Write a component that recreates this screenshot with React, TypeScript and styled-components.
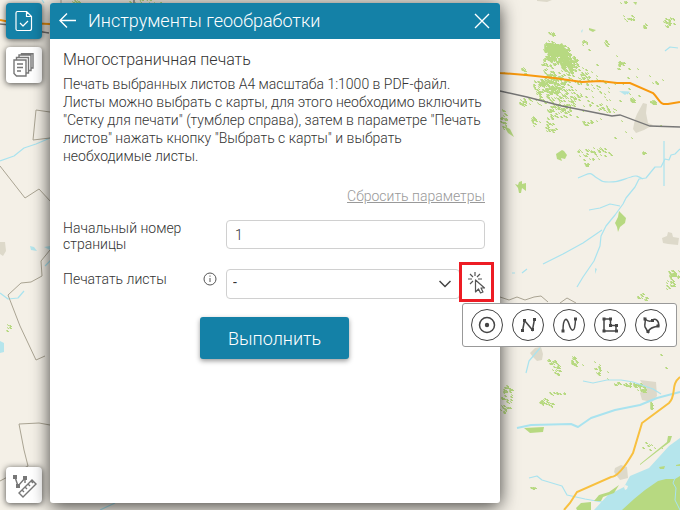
import React from "react";
import styled, { createGlobalStyle } from "styled-components";

const GlobalStyle = createGlobalStyle`
  *, *::before, *::after { box-sizing: border-box; }
  html, body, #root { height: 100%; }
  body { margin: 0; overflow: hidden; font-family: Roboto, "Liberation Sans", sans-serif; font-weight: 300; color: #333; }
  button, input, select { font: inherit; color: inherit; }
`;

const accent = "#1481a7";

const Page = styled.div`
  position: relative;
  display: flex;
  gap: 8px;
  min-height: 100vh;
  padding: 3px 6px 7px;
  background: #f4f0e7;
`;

const MapCanvas = styled.svg`
  position: absolute;
  inset: 0;
  width: 100%;
  height: 100%;
`;

const Rail = styled.nav`
  position: relative;
  display: flex;
  flex-direction: column;
  gap: 8px;
  width: 36px;
`;

const ToolButton = styled.button<{ $active?: boolean; $bottom?: boolean }>`
  display: flex;
  align-items: center;
  justify-content: center;
  width: 36px;
  height: 36px;
  margin-top: ${(p) => (p.$bottom ? "auto" : "0")};
  padding: 0;
  border: 0;
  border-radius: 4px;
  background: ${(p) => (p.$active ? accent : "#fff")};
  color: ${(p) => (p.$active ? "#fff" : "#777")};
  box-shadow: 0 1px 6px rgba(0, 0, 0, 0.7);
`;

const Panel = styled.section`
  position: relative;
  display: flex;
  flex-direction: column;
  flex: 0 1 450px;
  min-width: 0;
  border-radius: 3px;
  background: #fff;
  box-shadow: 0 3px 18px rgba(0, 0, 0, 0.75);
`;

const PanelHeader = styled.header`
  display: flex;
  align-items: center;
  height: 36px;
  padding: 0 10px 0 9px;
  gap: 11px;
  border-radius: 3px 3px 0 0;
  background: ${accent};
  color: #fff;
`;

const PanelTitle = styled.h1`
  flex: 1;
  margin: 0;
  font-size: 18px;
  font-weight: 300;
  line-height: 24px;
`;

const PlainButton = styled.button`
  display: flex;
  padding: 0;
  border: 0;
  background: none;
`;

const PanelBody = styled.div`
  padding: 10px 15px 0 13px;
`;

const Subtitle = styled.h2`
  margin: 0 0 4px;
  font-size: 16px;
  font-weight: 300;
  line-height: 22px;
`;

const Description = styled.p`
  margin: 0;
  font-size: 14px;
  line-height: 18px;
`;

const ResetRow = styled.div`
  display: flex;
  justify-content: flex-end;
  margin: 22px 0 15px;
`;

const ResetLink = styled.a`
  color: #999;
  font-size: 14px;
  line-height: 18px;
  text-decoration: underline;
`;

const Field = styled.div`
  display: grid;
  grid-template-columns: 127px 1fr;
  column-gap: 36px;
  margin-bottom: 17px;
`;

const FieldHead = styled.div<{ $hint?: boolean }>`
  display: flex;
  justify-content: space-between;
  margin-right: -27px;
  padding-top: ${(p) => (p.$hint ? "2px" : "0")};
`;

const Label = styled.label`
  width: 127px;
  font-size: 14px;
  line-height: 16px;
`;

const InfoButton = styled(PlainButton)`
  width: 14px;
  height: 14px;
  margin-top: 1px;
`;

const TextInput = styled.input`
  width: 100%;
  height: 29px;
  padding: 0 8px;
  border: 1px solid #d0d0d0;
  border-radius: 4px;
  background: #fff;
  font-size: 14px;
`;

const PickRow = styled.div`
  display: flex;
  margin-right: -9px;
`;

const SelectBox = styled.div`
  position: relative;
  flex: 1;
  margin-right: -1px;
`;

const Select = styled.select`
  width: 100%;
  height: 30px;
  padding: 0 28px 4px 6px;
  border: 1px solid #d0d0d0;
  border-radius: 4px;
  background: #fff;
  font-size: 14px;
  font-weight: 400;
  appearance: none;
`;

const Chevron = styled.svg`
  position: absolute;
  top: 11px;
  right: 9px;
  pointer-events: none;
`;

const PickAnchor = styled.div`
  position: relative;
  width: 35px;
  margin: -7px 0 -3px;
`;

const PickButton = styled.button`
  display: flex;
  align-items: center;
  justify-content: center;
  width: 35px;
  height: 40px;
  padding: 0;
  border: 3px solid #ed1c24;
  background: #fff;
`;

const DrawMenu = styled.div`
  position: absolute;
  top: 41px;
  left: 3px;
  z-index: 2;
  display: flex;
  gap: 9px;
  padding: 5px 9px 5px 8px;
  border: 1px solid #999;
  border-radius: 3px;
  background: #fff;
`;

const DrawButton = styled.button`
  display: flex;
  width: 32px;
  height: 32px;
  padding: 0;
  border: 1px solid #444;
  border-radius: 50%;
  background: #fff;
  align-items: center;
  justify-content: center;
  flex: none;
`;

const RunButton = styled.button`
  display: block;
  height: 42px;
  margin: 18px 0 0 137px;
  padding: 0 28px;
  border: 0;
  border-radius: 3px;
  background: ${accent};
  color: #fff;
  font-size: 18px;
  font-weight: 300;
  box-shadow: 0 2px 5px rgba(0, 0, 0, 0.4);
`;

type Cluster = [number, number, number, number, number, number];

const clusters: Cluster[] = [
  [550, 50, 7, 10, 150, 1], [559, 53, 10, 10, 170, 1], [568, 62, 9, 9, 120, 1], [551, 83, 12, 10, 180, 1],
  [573, 74, 16, 11, 70, 1], [556, 98, 22, 12, 110, 1], [588, 90, 22, 16, 40, 1], [550, 124, 6, 8, 24, 1],
  [548, 66, 7, 10, 30, 1], [538, 86, 6, 8, 24, 1], [560, 110, 14, 7, 40, 1],
  [524, 101, 6, 4, 16, 1], [503, 118, 3, 10, 24, 1], [533, 120, 2, 6, 18, 1], [587, 122, 5, 4, 12, 1],
  [523, 70, 3, 4, 14, 1], [550, 33, 4, 2, 14, 1], [584, 42, 3, 2, 10, 1], [605, 43, 3, 3, 8, 1],
  [668, 21, 6, 5, 26, 1], [628, 17, 7, 3, 12, 1], [644, 25, 3, 2, 8, 1], [620, 63, 3, 3, 14, 1],
  [623, 2, 3, 2, 5, 1], [607, 108, 10, 4, 16, 1], [631, 99, 2, 4, 14, 1], [653, 102, 3, 2, 14, 1],
  [655, 82, 4, 1, 6, 1], [593, 153, 18, 7, 38, 1], [586, 164, 2, 2, 8, 1], [643, 152, 3, 1, 8, 1],
  [674, 273, 7, 4, 34, 1], [669, 284, 4, 6, 16, 1], [643, 296, 8, 3, 12, 1], [551, 361, 5, 3, 14, 1],
  [556, 369, 4, 6, 22, 1], [573, 361, 3, 6, 22, 1], [557, 393, 9, 2, 16, 1], [543, 401, 4, 3, 16, 1],
  [550, 404, 5, 2, 8, 1], [597, 369, 3, 6, 16, 1], [506, 393, 6, 10, 30, 1], [504, 408, 5, 4, 14, 1],
  [617, 383, 4, 1, 10, 1], [632, 384, 9, 2, 34, 1], [641, 389, 5, 3, 20, 1], [650, 406, 1, 4, 10, 1],
  [532, 487, 3, 1, 8, 1], [650, 446, 11, 5, 8, 1], [580, 76, 90, 42, 24, 1], [600, 98, 75, 50, 20, 1],
  [148, 1, 19, 2, 14, 1], [74, 1, 5, 2, 8, 1], [622, 365, 55, 16, 8, 1], [8, 328, 2, 4, 5, 1],
];

function scatter([cx, cy, rx, ry, count, size]: Cluster, seed: number): string {
  let state = seed * 7919 + 17;
  const next = () => {
    state = (state * 16807) % 2147483647;
    return state / 2147483647;
  };
  let d = "";
  for (let i = 0; i < count; i++) {
    const angle = next() * Math.PI * 2;
    const r = Math.sqrt(next());
    const x = Math.round(cx + Math.cos(angle) * r * rx);
    const y = Math.round(cy + Math.sin(angle) * r * ry);
    const w = 1 + Math.round(next() * size);
    d += `M${x} ${y}h${w}v1h1v1h${-w}z`;
  }
  return d;
}

function BaseMap() {
  return (
    <MapCanvas viewBox="0 0 680 510" preserveAspectRatio="xMinYMin slice" aria-hidden="true">
      <rect width="680" height="510" fill="#f4f0e7" />
      <g fill="#ddd9ca">
        <path d="M643 103l4 1-1 9 2 10 5 2-9 5-8 3-3-4 2-10 2-5z" />
        <path d="M662 238l5-2 1-4 4 1 1 4 6 1-1 7-10-1-5-1z" />
        <path d="M530 353l5-5 6-1 2 7-1 6-5 1-4-4z" />
        <path d="M640 380l8 1 8 1 1 14-5 6-10-2-2-7 5-5z" />
        <path d="M615 468l6-3 6 2 1 11-8 2-6-8z" />
        <path d="M537 0h15l-5 2-10-1zM0 242l5 0 1 9-3 5-3-2z" />
      </g>
      <g fill="#b7d981">
        {clusters.map((cluster, i) => <path key={i} d={scatter(cluster, i + 1)} />)}
        <path d="M546 43l5 0 4 4 7-4 4 7 2 9 5 6 0 7-6-6-5-8-8-4-4 1-3-6z" />
        <path d="M556 154l6-4 2 1 3 4-2 4-4-1 1 3-5-2z" />
        <path d="M515 184l3 1 1-3 3-1 0 3 4-1 0 8-4-3-1 5-2 0-1-5z" />
        <path d="M619 211l7 7-1 5-5 4-2 5-1-5-2-4 3-6z" />
        <path d="M524 428l20-1-1 5-13 1z" />
        <path d="M633 2l4 0-1 3zM589 28l7 2-3 2-4-2zM650 101l6 1 1 2-7-1z" />
        <path d="M504 126l6 3 4 8-6-4zM640 464l27-22 1-6 4 0-2 6-12 9-18 14z" />
      </g>
      <g fill="none" stroke="#a9e3ef" strokeWidth="1.2" strokeLinejoin="round">
        <path d="M680 149l-5 5-4 1-2 5-4-1-4 8-6 0-9 11-7 1-4 8-9 11-3 6-8 11-9 11-5 10-1 10-6 15-11 16-6 10" />
        <path d="M578 178l7-3c7-3 6-1 12 3s6 4 12 4c13 0 14-3 22-5 5-2 7-1 12 2M589 210l11-2 10-4 10 2M602 230l-19 13-20 11-20 10M522 273l5-4M512 273l3 0" />
        <path d="M517 428l14-3 40-1 7 3 13-9 24-8 25-5 17-7 23-6" strokeWidth="2" />
        <path d="M583 381l10 2 14-3 14 0 12 2 20 7 8 5M540 348l-11 13-3 12M529 478l8-2 5 4 20 6 5 9 18 4 17 3" />
        <path d="M0 293l8 6 10-1 6-7M42 0l2 3M45 266l6-6M100 510l15-7" />
        <path d="M0 161l14-5 10-8 12-4 14-6M664 141v45M678 48l-8-1-5 4M622 92l7 0-2 2" />
      </g>
      <g fill="#b5e5ec">
        <path d="M594 510l14-15 16-8 6-11 19-8 20-22 11-8v72z" />
        <path d="M619 91l10 1-4 3zM581 31l2-2-1 4zM595 268l2 1-2 5zM30 246l4 1 3 4-6-1zM44 247l6-1v4zM0 341l4 2v9l-4 1z" />
      </g>
      <g fill="#b7d981">
        <path d="M622 510l12-11 11-9 13-9 8-2 9 0 5-3v34z" />
        <path d="M576 508l5-5 10-1 0 8h-14zM594 501l5-6 10-3 10-7-5 8-11 4-2 4z" />
        <path d="M659 467l6-1-1 3-4 0zM676 465l4-1v2h-4z" />
      </g>
      <path d="M625 485l3 1-1 3-2 1-1-3z" fill="#f4f0e7" />
      <path d="M675 478l-2 5 3 5-1 12 5 10" stroke="#a9e3ef" fill="none" />
      <g fill="none" stroke="#aaa493">
        <path d="M50 112l-14-2-3 30 17-2M0 166l25 32 14-9 12 13M50 250l-9 11 1 15-11 6-10 1-13 12 12 31 16 34 9-4M19 424l20-1 11 2M19 424l5 26 4 16-28 15" />
        <path d="M500 297l9 3 8-3 8 3 9-3 7-1 7 6M560 303l7-5 9 5M61 0v4" />
      </g>
      <path d="M0 24l10 1 8 3 31 5M134 0v4M500 91l27 6 35 9 40 8 10 2 8-1 30 11 30 1" fill="none" stroke="#777" strokeWidth="1.3" />
      <path d="M0 20l10 2 39 2 451 49 26 2 28 3 28 4 18-1 17 2h13l23 10c7 7 6 12 15 11l12-2" fill="none" stroke="#f8990e" strokeWidth="2" />
      <path d="M680 377c-10 8-3 18-11 26l-27 20-9 30c-7 12-15 24-22 24l-34 15-7 11-6 7" fill="none" stroke="#f8c03f" strokeWidth="2" />
    </MapCanvas>
  );
}

function DrawIcon({ kind }: { kind: string }) {
  return (
    <svg width="24" height="24" viewBox="0 0 24 24" fill="none" stroke="#454545" strokeWidth="1.5">
      {kind === "point" && <><circle cx="12" cy="12" r="7.5" /><circle cx="12" cy="12" r="2.2" fill="#454545" stroke="none" /></>}
      {kind === "line" && <><path d="M6.500 18l2-10.500 8 9.500 2-11" /><path d="M5 16h3v3H5zM7 6h3v3H7zM15 15h3v3h-3zM17 5h3v3h-3z" fill="#454545" stroke="none" /></>}
      {kind === "curve" && <><path d="M6 18C6 4 10 4 12 11s6 11 6.500-5" /><path d="M4.500 16.500h3v3h-3zM17 4.500h3v3h-3z" fill="#454545" stroke="none" /></>}
      {kind === "polygon" && <><path d="M6 6h6.500v6.500H18V18H6z" /><path d="M4.500 4.500h3v3h-3zM11 4.500h3v3h-3zM11 11h3v3h-3zM17 11h3v3h-3zM17 16.500h3v3h-3zM4.500 16.500h3v3h-3z" fill="#454545" stroke="none" /></>}
      {kind === "area" && <><path d="M6 6c1 4-1 5 0 8l3 5c1-4 5-5 10.500-6 1-5-3-8-6-6-2 2-4 2-7.500-1z" /><path d="M4.500 4.500h3v3h-3zM12 6h3v3h-3zM17.500 11.500h3v3h-3zM7.500 17h3v3h-3z" fill="#454545" stroke="none" /></>}
    </svg>
  );
}

const drawTools = [
  { kind: "point", label: "Точка" },
  { kind: "line", label: "Линия" },
  { kind: "curve", label: "Кривая" },
  { kind: "polygon", label: "Полигон" },
  { kind: "area", label: "Область" },
];

export default function App() {
  return (
    <>
      <GlobalStyle />
      <Page>
        <BaseMap />
        <Rail>
          <ToolButton $active aria-label="Геообработка">
            <svg width="18" height="22" viewBox="0 0 18 22" fill="none" stroke="currentColor" strokeWidth="1.2" strokeLinejoin="round">
              <path d="M2.500 1.500h9l5 5v12a2 2 0 0 1-2 2h-12a1.500 1.500 0 0 1-1.500-1.500V3a1.500 1.500 0 0 1 1.500-1.500zM11.500 1.500v5h5M5 13l3 3 5-5" />
            </svg>
          </ToolButton>
          <ToolButton aria-label="Отчёты">
            <svg width="24" height="24" viewBox="0 0 24 24" fill="none" stroke="currentColor" strokeWidth="1.400">
              <path d="M2 7h12v16H4.500L2 20.500zM4.500 7V4.500h12V20H14M7 4.500V2h12v15.500h-2.500M9.500 2V.7H21V15h-2M5 11h6M5 14.500h6M5 18h4" />
            </svg>
          </ToolButton>
          <ToolButton $bottom aria-label="Измерения">
            <svg width="26" height="26" viewBox="0 0 26 26" fill="none" stroke="#777" strokeWidth="1.400">
              <path d="M4 5l3 9 7-8v5" />
              <path d="M2 3h4v4H2zM5 12h4v4H5zM12 4h4v4h-4z" fill="#777" stroke="none" />
              <path d="M8 21L21 8l4 4-13 13zM11 18l2 2M14 15l2 2M17 12l2 2M20 9l2 2" />
            </svg>
          </ToolButton>
        </Rail>
        <Panel>
          <PanelHeader>
            <PlainButton aria-label="Назад">
              <svg width="18" height="18" viewBox="0 0 18 18" fill="none" stroke="#fff" strokeWidth="1.400"><path d="M17 8.500H1M8 1.500l-7 7 7 7" /></svg>
            </PlainButton>
            <PanelTitle>Инструменты геообработки</PanelTitle>
            <PlainButton aria-label="Закрыть">
              <svg width="16" height="16" viewBox="0 0 16 16" fill="none" stroke="#fff" strokeWidth="1.400"><path d="M1 1l14 14M15 1L1 15" /></svg>
            </PlainButton>
          </PanelHeader>
          <PanelBody>
            <Subtitle>Многостраничная печать</Subtitle>
            <Description>
              Печать выбранных листов A4 масштаба 1:1000 в PDF-файл.<br />
              Листы можно выбрать с карты, для этого необходимо включить<br />
              "Сетку для печати" (тумблер справа), затем в параметре "Печать<br />
              листов" нажать кнопку "Выбрать с карты" и выбрать<br />
              необходимые листы.
            </Description>
            <ResetRow><ResetLink href="#reset">Сбросить параметры</ResetLink></ResetRow>
            <Field>
              <FieldHead><Label htmlFor="start-page">Начальный номер страницы</Label></FieldHead>
              <TextInput id="start-page" defaultValue="1" />
            </Field>
            <Field>
              <FieldHead $hint>
                <Label htmlFor="sheets">Печатать листы</Label>
                <InfoButton aria-label="Справка">
                  <svg width="14" height="14" viewBox="0 0 14 14" fill="none" stroke="#555"><circle cx="7" cy="7" r="6" /><path d="M7 6v4M7 3.500v1.200" /></svg>
                </InfoButton>
              </FieldHead>
              <PickRow>
                <SelectBox>
                  <Select id="sheets" defaultValue="-"><option>-</option></Select>
                  <Chevron width="12" height="8" viewBox="0 0 12 8" fill="none" stroke="#444" strokeWidth="1.500"><path d="M0.500 1L6 6.500 11.500 1" /></Chevron>
                </SelectBox>
                <PickAnchor>
                  <PickButton aria-label="Выбрать с карты">
                    <svg width="18" height="24" viewBox="0 -1 18 24" fill="none" stroke="#555" strokeWidth="1.200">
                      <path d="M7 1v4M2 3l3 3M12 3L9 6M0 8h4M10 8h4M2 13l3-3" />
                      <path d="M7.500 9v12l3-3 2 4 2.500-1-2-4h3.500z" strokeLinejoin="round" />
                    </svg>
                  </PickButton>
                  <DrawMenu role="group" aria-label="Способ выбора">
                    {drawTools.map((tool) => (
                      <DrawButton key={tool.kind} aria-label={tool.label}><DrawIcon kind={tool.kind} /></DrawButton>
                    ))}
                  </DrawMenu>
                </PickAnchor>
              </PickRow>
            </Field>
            <RunButton>Выполнить</RunButton>
          </PanelBody>
        </Panel>
      </Page>
    </>
  );
}
